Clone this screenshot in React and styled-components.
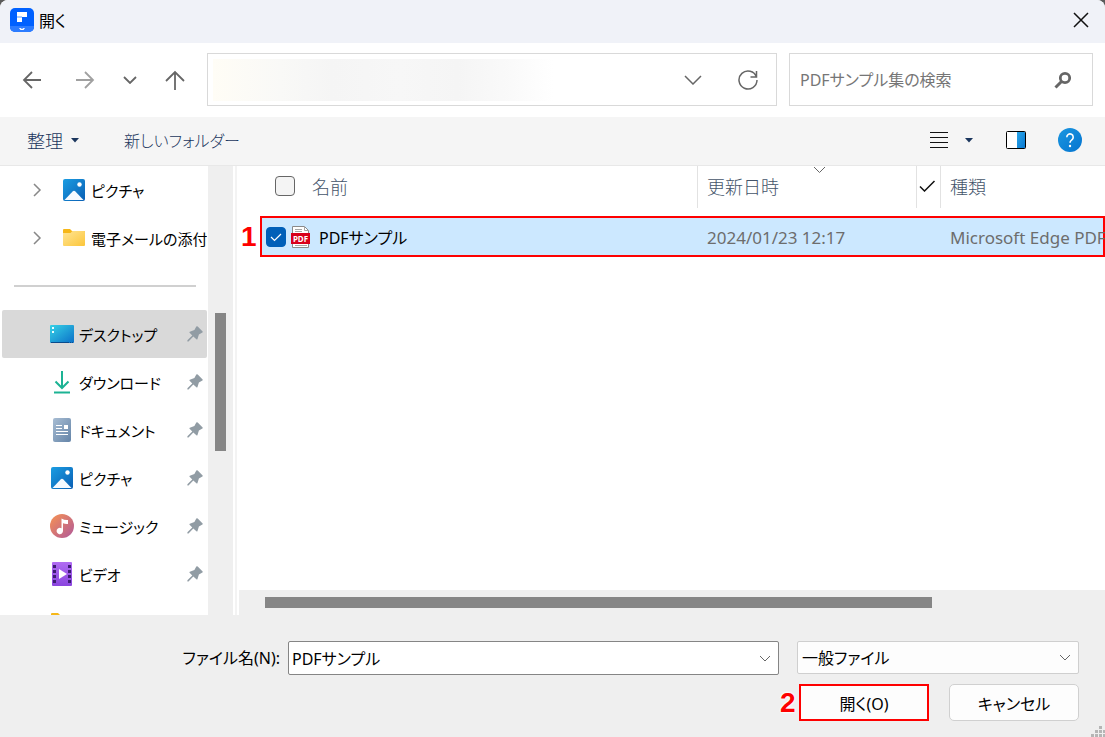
import React from "react";
import styled, { createGlobalStyle } from "styled-components";

const GlobalStyle = createGlobalStyle`
  * {
    box-sizing: border-box;
  }
  body {
    margin: 0;
    background: #5b5b5b;
  }
  body, button, input, select {
    font-family: "Noto Sans", "Noto Sans CJK JP", sans-serif;
    font-size: 16px;
    font-weight: 400;
    font-feature-settings: "palt";
    color: #000;
  }
  button {
    padding: 0;
    border: 0;
    background: none;
  }
  svg {
    display: block;
    flex-shrink: 0;
  }
`;

const Dialog = styled.div`
  position: relative;
  display: flex;
  flex-direction: column;
  height: 100vh;
  background: #fff;
  border-radius: 8px 8px 0 0;
  overflow: hidden;
`;

const TitleBar = styled.header`
  display: flex;
  align-items: center;
  gap: 5px;
  height: 43px;
  padding: 0 12px 3px 10px;
  background: #f0f2f8;
`;

const Title = styled.h1`
  flex: 1;
  margin: 0;
  font-size: 16px;
  font-weight: 400;
`;

const NavBar = styled.nav`
  display: flex;
  align-items: center;
  gap: 12px;
  padding: 10px 12px 11px 16px;
`;

const NavButtons = styled.div`
  display: flex;
  align-items: center;
  gap: 21px;
  margin-right: 4px;
`;

const IconButton = styled.button`
  display: flex;
  align-items: center;
  justify-content: center;
  width: ${(props) => props.$width || 24}px;
  height: 24px;
`;

const Box = styled.div`
  display: flex;
  align-items: center;
  height: 53px;
  border: 1px solid #d9d9d9;
  background: #fff;
`;

const AddressBox = styled(Box)`
  flex: 1;
  gap: 31px;
  padding: 0 16px 0 5px;
`;

const AddressInput = styled.input`
  flex: 1;
  min-width: 0;
  height: 42px;
  border: 0;
  outline: 0;
  background: linear-gradient(90deg, #fffdf6, #f9f9f7 20%, #f5f5f5 35%, #f7f7f7 55%, #f5f5f5 72%, #fafafa 88%, #fff) no-repeat;
  background-size: 340px 100%;
`;

const SearchBox = styled(Box)`
  width: 304px;
  padding: 0 17px 0 10px;
`;

const SearchInput = styled.input`
  flex: 1;
  min-width: 0;
  padding: 0;
  border: 0;
  outline: 0;
  &::placeholder {
    color: #767676;
    opacity: 1;
  }
`;

const ToolBar = styled.div`
  display: flex;
  align-items: center;
  height: 49px;
  padding: 0 23px 2px 27px;
  background: #f5f5f5;
  border-bottom: 1px solid #e8e8e8;
`;

const ToolButton = styled.button`
  display: flex;
  align-items: center;
  gap: 8px;
  margin-right: ${(props) => props.$space || 0}px;
  color: #1b365d;
  font-size: ${(props) => props.$size || 16}px;
  font-weight: 300;
`;

const Spacer = styled.div`
  flex: 1;
`;

const Body = styled.div`
  display: flex;
  flex: 1;
  min-height: 0;
`;

const Sidebar = styled.aside`
  width: 208px;
  flex-shrink: 0;
  overflow: hidden;
`;

const TreeItem = styled.a`
  display: flex;
  align-items: center;
  height: 48px;
  padding-left: ${(props) => (props.$nested ? 47 : 29)}px;
  padding-right: ${(props) => (props.$nested ? 4 : 0)}px;
  margin: 0 1px 0 2px;
  border-radius: 2px;
  background: ${(props) => (props.$active ? "#d9d9d9" : "transparent")};
  color: #000;
  font-size: 15px;
  text-decoration: none;
  white-space: nowrap;
`;

const TreeIcon = styled.span`
  display: flex;
  justify-content: center;
  flex-shrink: 0;
  width: 26px;
  margin: 0 4px 0 ${(props) => (props.$indent ? 18 : 0)}px;
`;

const TreeLabel = styled.span`
  flex: 1;
  min-width: 0;
  overflow: hidden;
`;

const Divider = styled.hr`
  height: 2px;
  margin: 23px 12px 23px 14px;
  border: 0;
  background: #d0d0d0;
`;

const VerticalScroll = styled.div`
  width: 25px;
  flex-shrink: 0;
  padding: 147px 7px 0;
  background: #efefef;
`;

const VerticalThumb = styled.div`
  height: 138px;
  background: #868686;
`;

const Splitter = styled.div`
  width: 6px;
  flex-shrink: 0;
  border: solid #fff;
  border-width: 0 2px;
  background: #f3f3f3;
`;

const Main = styled.main`
  display: flex;
  flex: 1;
  flex-direction: column;
  min-width: 0;
`;

const FileTable = styled.table`
  width: 100%;
  table-layout: fixed;
  border-collapse: separate;
  border-spacing: 0;
  tbody::before {
    content: "";
    display: block;
    height: 8px;
  }
`;

const FileArea = styled.div`
  flex: 1;
  min-height: 0;
  padding-left: 21px;
`;

const Col = styled.col`
  width: ${(props) => props.$width};
`;

const HeadCell = styled.th`
  position: relative;
  height: 42px;
  padding: 0 0 2px ${(props) => (props.$tight ? 2 : 9)}px;
  border-left: ${(props) => (props.$first ? 0 : "1px solid #e2e2e2")};
  color: #44546a;
  font-size: 18px;
  font-weight: 300;
  text-align: left;
`;

const SortMark = styled.span`
  position: absolute;
  top: 0;
  right: 90px;
`;

const FileRow = styled.tr`
  background: #cce8ff;
  outline: 2px solid #fe0000;
  outline-offset: -2px;
`;

const Cell = styled.td`
  position: relative;
  height: 41px;
  padding: 2px 0 0 10px;
  color: #6d6d6d;
  font-size: 17px;
  white-space: nowrap;
`;

const NameCell = styled(Cell)`
  padding: 0 0 0 6px;
  color: #000;
  font-size: 16px;
`;

const Inline = styled.div`
  display: flex;
  align-items: center;
  gap: ${(props) => props.$gap}px;
  padding-left: ${(props) => props.$pad || 0}px;
`;

const CheckBox = styled.input`
  appearance: none;
  flex-shrink: 0;
  width: 20px;
  height: 20px;
  margin: 0;
  border: 1px solid #666;
  border-radius: 4px;
  background: #f4f4f4;
  &:checked {
    border-color: #005fb8;
    background: #005fb8;
  }
`;

const CheckWrap = styled.span`
  position: relative;
  display: flex;
  svg {
    position: absolute;
    top: 4px;
    left: 4px;
    pointer-events: none;
  }
`;

const Step = styled.span`
  position: absolute;
  left: -19px;
  top: 50%;
  transform: translateY(-50%);
  color: #fe0000;
  font-family: "Liberation Sans", Arial, sans-serif;
  font-size: 28px;
  font-weight: 700;
  line-height: 30px;
  text-shadow: 0 0 2px #fff, 0 0 3px #fff, 0 0 3px #fff;
`;

const HorizontalScroll = styled.div`
  height: 25px;
  padding: 7px 6px 7px 26px;
  background: #efefef;
`;

const HorizontalThumb = styled.div`
  width: 80%;
  height: 11px;
  background: #868686;
`;

const Footer = styled.footer`
  display: flex;
  flex-direction: column;
  gap: 9px;
  padding: 26px 26px 16px 0;
  background: #efefef;
`;

const FooterRow = styled.div`
  display: flex;
  justify-content: flex-end;
  align-items: flex-start;
  gap: ${(props) => props.$gap}px;
`;

const FieldLabel = styled.label`
  width: 288px;
  padding-right: 8px;
  line-height: 34px;
  text-align: right;
`;

const NameField = styled.div`
  display: flex;
  align-items: center;
  flex: 1;
  height: 34px;
  padding-right: 1px;
  margin-right: 18px;
  border: 1px solid #858585;
  border-radius: 2px;
  background: #fff;
`;

const NameInput = styled.input`
  flex: 1;
  min-width: 0;
  padding: 0 3px;
  border: 0;
  outline: 0;
  background: none;
`;

const SelectWrap = styled.div`
  position: relative;
  width: 282px;
  svg {
    position: absolute;
    top: 13px;
    right: 8px;
    pointer-events: none;
  }
`;

const Select = styled.select`
  appearance: none;
  display: block;
  width: 100%;
  height: 33px;
  padding: 0 4px;
  border: 1px solid #cfcfcf;
  border-radius: 2px;
  background: #fdfdfd;
`;

const ActionButton = styled.button`
  position: relative;
  width: 130px;
  height: 37px;
  border: ${(props) => (props.$marked ? "2px solid #fe0000" : "1px solid #d0d0d0")};
  border-radius: ${(props) => (props.$marked ? 0 : 5)}px;
  background: #fdfdfd;
`;

const ButtonStep = styled(Step)`
  left: -21px;
`;

const Grip = styled.svg`
  position: absolute;
  right: 0;
  bottom: 0;
`;

function Stroke({ size, d, color = "#666", width = 2 }) {
  const [w, h] = size;
  return (
    <svg width={w} height={h} viewBox={`0 0 ${w} ${h}`} fill="none" stroke={color} strokeWidth={width} aria-hidden="true">
      <path d={d} />
    </svg>
  );
}

function Caret() {
  return (
    <svg width="8" height="5" viewBox="0 0 8 5" aria-hidden="true">
      <path d="M0 0h8L4 4.500z" fill="#1b365d" />
    </svg>
  );
}

function Logo() {
  return (
    <svg width="24" height="24" viewBox="0 0 24 24" aria-hidden="true">
      <rect width="24" height="24" rx="5" fill="#0061ff" />
      <path d="M0 18h24v1a5 5 0 0 1-5 5H5a5 5 0 0 1-5-5z" fill="#2c7cff" />
      <path d="M7 4h10v5h-5v5H7z" fill="#fff" />
      <path d="M7 8h5v2H7z" fill="#a9ccff" />
      <path d="M9 20h1.500l1.500 1 1.500-1H15l-1.500 2h-3z" fill="#fff" />
    </svg>
  );
}

function PictureIcon() {
  return (
    <svg width="22" height="22" viewBox="0 0 22 22" aria-hidden="true">
      <defs>
        <linearGradient id="pic" x1="0" y1="0" x2="1" y2="1">
          <stop offset="0" stopColor="#1b9de2" />
          <stop offset="1" stopColor="#0a5fb4" />
        </linearGradient>
      </defs>
      <rect width="22" height="22" rx="2" fill="url(#pic)" />
      <path d="M1.500 21L9.600 12.500q1.400-1.400 2.800 0l8.100 8.500z" fill="#f5faff" />
      <circle cx="16.500" cy="5.500" r="2.200" fill="#fff" />
    </svg>
  );
}

function FolderIcon() {
  return (
    <svg width="22" height="18" viewBox="0 0 22 18" aria-hidden="true">
      <defs>
        <linearGradient id="folder" x1="0" y1="0" x2="1" y2="1">
          <stop offset="0" stopColor="#ffe595" />
          <stop offset="1" stopColor="#fcc63a" />
        </linearGradient>
      </defs>
      <path d="M0 1q0-1 1-1h6l2 2h12q1 0 1 1v8H0z" fill="#f6b718" />
      <path d="M0 4h7.500l2-2H21q1 0 1 1v13q0 1-1 1H1q-1 0-1-1z" fill="url(#folder)" />
    </svg>
  );
}

function DesktopIcon() {
  return (
    <svg width="24" height="18" viewBox="0 0 24 18" aria-hidden="true">
      <defs>
        <linearGradient id="desk" x1="0" y1="0" x2="1" y2="1">
          <stop offset="0" stopColor="#36d2e6" />
          <stop offset="1" stopColor="#0b70c8" />
        </linearGradient>
      </defs>
      <rect width="24" height="18" rx="1" fill="url(#desk)" />
      <path d="M2 2h2v2H2zM2 6h2v2H2z" fill="#e9fdff" />
      <path d="M1 17.500h18M20 17.500h1M22 17.500h1" stroke="#0a4b8c" />
    </svg>
  );
}

function DownloadIcon() {
  return (
    <svg width="18" height="24" viewBox="0 0 18 24" fill="none" stroke="#1cb394" strokeWidth="2" aria-hidden="true">
      <path d="M9 1v17M2.500 11.500L9 18l6.500-6.500M1 22.500h16" />
    </svg>
  );
}

function DocumentIcon() {
  return (
    <svg width="18" height="24" viewBox="0 0 18 24" aria-hidden="true">
      <defs>
        <linearGradient id="doc" x1="0" y1="0" x2="1" y2="1">
          <stop offset="0" stopColor="#a8bdd3" />
          <stop offset="1" stopColor="#6484a8" />
        </linearGradient>
      </defs>
      <rect width="18" height="24" rx="2" fill="url(#doc)" />
      <path d="M3 7.500h6M3 10.500h6M3 13.500h12M3 16.500h12" stroke="#fff" strokeWidth="1.200" />
      <path d="M11 7h4v4h-4z" fill="#fff" />
    </svg>
  );
}

function MusicIcon() {
  return (
    <svg width="24" height="24" viewBox="0 0 24 24" aria-hidden="true">
      <defs>
        <linearGradient id="music" x1="0" y1="0" x2="1" y2="1">
          <stop offset="0.150" stopColor="#ed8a5c" />
          <stop offset="1" stopColor="#b0589b" />
        </linearGradient>
      </defs>
      <circle cx="12" cy="12" r="12" fill="url(#music)" />
      <path d="M11.500 4.500q3 1.800 6.500 1.500v4q-2.500.3-5-.7V17a3.200 3.200 0 1 1-1.500-2.700z" fill="#fff" />
    </svg>
  );
}

function VideoIcon() {
  return (
    <svg width="20" height="24" viewBox="0 0 20 24" aria-hidden="true">
      <defs>
        <linearGradient id="video" x1="0" y1="0" x2="0" y2="1">
          <stop offset="0" stopColor="#b06cf2" />
          <stop offset="1" stopColor="#8a45de" />
        </linearGradient>
      </defs>
      <rect width="20" height="24" rx="1" fill="url(#video)" />
      <path d="M2.500 3v20M17.500 3v20" stroke="#3d1c73" strokeWidth="3" strokeDasharray="3 2" />
      <path d="M7 7l8 5-8 5z" fill="#fff" />
    </svg>
  );
}

function PinIcon() {
  return (
    <svg width="16" height="16" viewBox="0 0 16 16" aria-hidden="true">
      <path d="M9.300.6q.7-.7 1.400 0l4.700 4.700q.7.700 0 1.300l-3.500 2-1.500 4.600q-.4.600-1 .1L6.300 10.500 1.500 15.400H.4v-1.100l4.900-4.800L2.600 6.700q-.5-.6.200-1l4.600-1.600z" fill="#919ca4" />
    </svg>
  );
}

function PdfIcon() {
  return (
    <svg width="20" height="22" viewBox="0 0 20 22" aria-hidden="true">
      <path d="M1.500.5h12l4 4v17h-16z" fill="#fff" stroke="#8a8a8a" />
      <path d="M13.500.5v4h4M4 3.500h7M4 5.500h7M4 19.500h12" fill="none" stroke="#a5a5a5" />
      <rect y="7" width="19" height="11" fill="#d8001b" />
      <text x="9.500" y="16" textAnchor="middle" fill="#fff" fontFamily="Noto Sans" fontSize="8" fontWeight="700">PDF</text>
    </svg>
  );
}

function SearchIcon() {
  return (
    <svg width="18" height="18" viewBox="0 0 18 18" fill="none" stroke="#666" aria-hidden="true">
      <circle cx="11" cy="7" r="4.700" strokeWidth="2.800" />
      <path d="M7.500 10.500L1.500 16.500" strokeWidth="3" />
    </svg>
  );
}

function PaneIcon() {
  return (
    <svg width="20" height="18" viewBox="0 0 20 18" aria-hidden="true">
      <defs>
        <linearGradient id="pane" x1="0" y1="0" x2="1" y2="1">
          <stop offset="0" stopColor="#2aa6ea" />
          <stop offset="1" stopColor="#0a78d0" />
        </linearGradient>
      </defs>
      <rect x="0.500" y="0.500" width="19" height="17" rx="1" fill="#fff" stroke="#000" />
      <path d="M11 1h8v16h-8z" fill="url(#pane)" />
    </svg>
  );
}

function HelpIcon() {
  return (
    <svg width="24" height="24" viewBox="0 0 24 24" aria-hidden="true">
      <defs>
        <linearGradient id="help" x1="0" y1="0" x2="1" y2="1">
          <stop offset="0" stopColor="#1c97e0" />
          <stop offset="1" stopColor="#0474d0" />
        </linearGradient>
      </defs>
      <circle cx="12" cy="12" r="12" fill="url(#help)" />
      <path d="M8.800 9.200a3.200 3.200 0 1 1 5 2.600q-1.800 1.200-1.800 3" fill="none" stroke="#fff" strokeWidth="1.600" />
      <circle cx="12" cy="18" r="1.200" fill="#fff" />
    </svg>
  );
}

const libraries = [
  { name: "ピクチャ", icon: <PictureIcon /> },
  { name: "電子メールの添付", icon: <FolderIcon /> },
];

const places = [
  { name: "デスクトップ", icon: <DesktopIcon />, active: true },
  { name: "ダウンロード", icon: <DownloadIcon /> },
  { name: "ドキュメント", icon: <DocumentIcon /> },
  { name: "ピクチャ", icon: <PictureIcon /> },
  { name: "ミュージック", icon: <MusicIcon /> },
  { name: "ビデオ", icon: <VideoIcon /> },
  { name: "PDFサンプル集", icon: <FolderIcon />, unpinned: true },
];

function App() {
  const [fileName, setFileName] = React.useState("PDFサンプル");
  const [checked, setChecked] = React.useState(true);

  return (
    <Dialog>
      <GlobalStyle />
      <TitleBar>
        <Logo />
        <Title>開く</Title>
        <IconButton aria-label="閉じる">
          <Stroke size={[16, 16]} d="M1 1l14 14M15 1L1 15" color="#111" width={1.5} />
        </IconButton>
      </TitleBar>

      <NavBar>
        <NavButtons>
          <IconButton $width={32} aria-label="戻る">
            <Stroke size={[20, 18]} d="M19 9H2M10 1L2 9l8 8" width={1.8} />
          </IconButton>
          <IconButton $width={32} aria-label="進む">
            <Stroke size={[20, 18]} d="M1 9h17M10 1l8 8-8 8" color="#a0a0a0" width={1.8} />
          </IconButton>
          <IconButton $width={16} aria-label="履歴">
            <Stroke size={[14, 8]} d="M1 1l6 6 6-6" width={1.8} />
          </IconButton>
          <IconButton $width={32} aria-label="上へ">
            <Stroke size={[20, 20]} d="M10 20V2M1 11l9-9 9 9" width={1.8} />
          </IconButton>
        </NavButtons>
        <AddressBox>
          <AddressInput aria-label="アドレス" />
          <IconButton aria-label="以前の場所">
            <Stroke size={[18, 10]} d="M1 1l8 8 8-8" width={1.5} />
          </IconButton>
          <IconButton aria-label="更新">
            <Stroke size={[20, 20]} d="M18.500 7A9 9 0 1 0 19 10M18.500 1v6h-6" width={1.5} />
          </IconButton>
        </AddressBox>
        <SearchBox>
          <SearchInput aria-label="検索" placeholder="PDFサンプル集の検索" />
          <IconButton aria-label="検索を実行">
            <SearchIcon />
          </IconButton>
        </SearchBox>
      </NavBar>

      <ToolBar>
        <ToolButton $space={45} $size={18}>整理<Caret /></ToolButton>
        <ToolButton>新しいフォルダー</ToolButton>
        <Spacer />
        <ToolButton $space={17} aria-label="表示">
          <Stroke size={[18, 17]} d="M0 .5h18M0 5.500h18M0 10.500h18M0 15.500h18" color="#111" width={1} />
        </ToolButton>
        <ToolButton $space={33} aria-label="その他のオプション"><Caret /></ToolButton>
        <ToolButton $space={32} aria-label="プレビュー ウィンドウ"><PaneIcon /></ToolButton>
        <ToolButton aria-label="ヘルプ"><HelpIcon /></ToolButton>
      </ToolBar>

      <Body>
        <Sidebar>
          {libraries.map((item) => (
            <TreeItem key={item.name} href="#">
              <Stroke size={[12, 14]} d="M3 1l6 6-6 6" color="#888" width={1.5} />
              <TreeIcon $indent>{item.icon}</TreeIcon>
              <TreeLabel>{item.name}</TreeLabel>
            </TreeItem>
          ))}
          <Divider />
          {places.map((item) => (
            <TreeItem key={item.name} href="#" $nested $active={item.active}>
              <TreeIcon>{item.icon}</TreeIcon>
              <TreeLabel>{item.name}</TreeLabel>
              {!item.unpinned && <PinIcon />}
            </TreeItem>
          ))}
        </Sidebar>
        <VerticalScroll>
          <VerticalThumb />
        </VerticalScroll>
        <Splitter />
        <Main>
          <FileArea>
            <FileTable>
              <colgroup>
                <Col $width="auto" />
                <Col $width="219px" />
                <Col $width="24px" />
                <Col $width="165px" />
              </colgroup>
              <thead>
                <tr>
                  <HeadCell $first>
                    <Inline $gap={17} $pad={6}>
                      <CheckBox type="checkbox" aria-label="すべて選択" />
                      名前
                    </Inline>
                  </HeadCell>
                  <HeadCell>
                    <SortMark>
                      <Stroke size={[13, 8]} d="M1 1l5.500 5.500L12 1" width={1} />
                    </SortMark>
                    更新日時
                  </HeadCell>
                  <HeadCell $tight>
                    <Stroke size={[17, 12]} d="M1 6.500l4.500 4.500L15.500 1" color="#111" width={1.5} />
                  </HeadCell>
                  <HeadCell>種類</HeadCell>
                </tr>
              </thead>
              <tbody>
                <FileRow>
                  <NameCell>
                    <Step>1</Step>
                    <Inline $gap={5}>
                      <CheckWrap>
                        <CheckBox
                          id="file"
                          type="checkbox"
                          checked={checked}
                          onChange={(e) => setChecked(e.target.checked)}
                        />
                        <Stroke size={[12, 12]} d="M1 6l3.500 3.500L11 3" color="#fff" width={1.2} />
                      </CheckWrap>
                      <PdfIcon />
                      <Inline as="label" htmlFor="file" $pad={3}>PDFサンプル</Inline>
                    </Inline>
                  </NameCell>
                  <Cell>2024/01/23 12:17</Cell>
                  <Cell />
                  <Cell>Microsoft Edge PDF</Cell>
                </FileRow>
              </tbody>
            </FileTable>
          </FileArea>
          <HorizontalScroll>
            <HorizontalThumb />
          </HorizontalScroll>
        </Main>
      </Body>

      <Footer>
        <FooterRow $gap={0}>
          <FieldLabel htmlFor="name">ファイル名(N):</FieldLabel>
          <NameField>
            <NameInput id="name" value={fileName} onChange={(e) => setFileName(e.target.value)} />
            <IconButton aria-label="候補">
              <Stroke size={[12, 7]} d="M1 1l5 5 5-5" width={1} />
            </IconButton>
          </NameField>
          <SelectWrap>
            <Select aria-label="ファイルの種類">
              <option>一般ファイル</option>
            </Select>
            <Stroke size={[12, 7]} d="M1 1l5 5 5-5" width={1} />
          </SelectWrap>
        </FooterRow>
        <FooterRow $gap={20}>
          <ActionButton $marked>
            <ButtonStep>2</ButtonStep>
            開く(O)
          </ActionButton>
          <ActionButton>キャンセル</ActionButton>
        </FooterRow>
      </Footer>
      <Grip width="14" height="12" viewBox="0 0 14 12" fill="#b5b5b5" aria-hidden="true">
        <path d="M8 1h3v3H8zM4 5h3v3H4zM8 5h3v3H8zM0 9h3v3H0zM4 9h3v3H4zM8 9h3v3H8zM12 5h2v3h-2zM12 9h2v3h-2z" />
      </Grip>
    </Dialog>
  );
}

export default App;
